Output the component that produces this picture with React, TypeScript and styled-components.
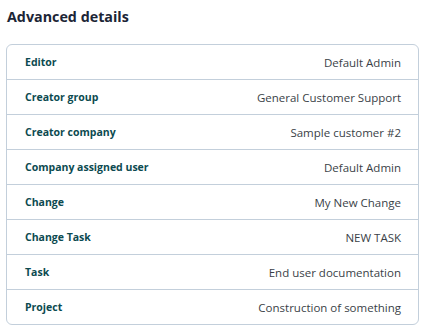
import React from 'react';
import styled, { createGlobalStyle } from 'styled-components';

const GlobalStyle = createGlobalStyle`
  body {
    margin: 0;
    background: #ffffff;
    font-family: "Open Sans", "Liberation Sans", sans-serif;
  }
`;

const details = [
  { label: 'Editor', value: 'Default Admin' },
  { label: 'Creator group', value: 'General Customer Support' },
  { label: 'Creator company', value: 'Sample customer #2' },
  { label: 'Company assigned user', value: 'Default Admin' },
  { label: 'Change', value: 'My New Change' },
  { label: 'Change Task', value: 'NEW TASK' },
  { label: 'Task', value: 'End user documentation' },
  { label: 'Project', value: 'Construction of something' },
];

const Styled = {
  Wrap: styled.div`
    padding: 6px 6px 10px 6px;
    width: 413px;
  `,
  Title: styled.h2`
    margin: 0 0 16px 1px;
    font-size: 14.3px;
    font-weight: 700;
    line-height: 22px;
    color: #1c2536;
  `,
  Card: styled.div`
    border: 1px solid #c3cfdb;
    border-radius: 6px;
    display: flex;
    flex-direction: column;
  `,
  Row: styled.div`
    display: flex;
    justify-content: space-between;
    align-items: center;
    height: 34px;
    padding: 0 17px 0 18px;
    & + & {
      border-top: 1px solid #c3cfdb;
    }
  `,
  Label: styled.span`
    font-size: 10.5px;
    font-weight: 700;
    color: #0c4a50;
  `,
  Value: styled.span`
    font-size: 11.5px;
    color: #3a3f47;
  `,
};

function App() {
  return (
    <Styled.Wrap>
      <GlobalStyle />
      <Styled.Title>Advanced details</Styled.Title>
      <Styled.Card>
        {details.map((d) => (
          <Styled.Row key={d.label}>
            <Styled.Label>{d.label}</Styled.Label>
            <Styled.Value>{d.value}</Styled.Value>
          </Styled.Row>
        ))}
      </Styled.Card>
    </Styled.Wrap>
  );
}

export default App;
